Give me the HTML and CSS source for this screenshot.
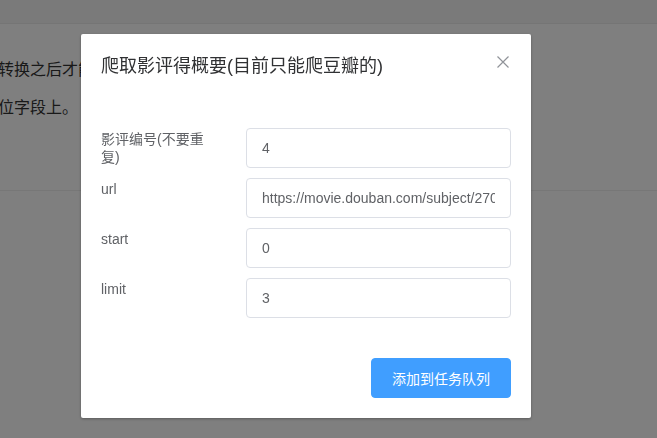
FILE: index.html
```html
<!DOCTYPE html>
<html lang="zh">
<head>
<meta charset="utf-8">
<title>爬取影评</title>
<link rel="stylesheet" href="styles.css">
</head>
<body>
<div class="page">
  <div class="topbar"></div>
  <div class="panel">
    <p class="line">转换之后才能正确保存到对应的数据库中，请注意格式。</p>
    <p class="line">位字段上。</p>
  </div>
</div>
<div class="overlay">
  <div class="dialog">
    <div class="dialog-header">
      <span class="dialog-title">爬取影评得概要(目前只能爬豆瓣的)</span>
      <button class="close" aria-label="关闭">
        <svg width="16" height="16" viewBox="0 0 16 16"><path d="M2.5 2.5 L13.5 13.5 M13.5 2.5 L2.5 13.5" stroke="#909399" stroke-width="1.2" fill="none"/></svg>
      </button>
    </div>
    <div class="dialog-body">
      <form class="form">
        <div class="form-item">
          <label class="form-label">影评编号(不要重复)</label>
          <input class="input" type="text" value="4">
        </div>
        <div class="form-item">
          <label class="form-label">url</label>
          <input class="input" type="text" value="https://movie.douban.com/subject/27010768/">
        </div>
        <div class="form-item">
          <label class="form-label">start</label>
          <input class="input" type="text" value="0">
        </div>
        <div class="form-item">
          <label class="form-label">limit</label>
          <input class="input" type="text" value="3">
        </div>
      </form>
    </div>
    <div class="dialog-footer">
      <button class="btn-primary">添加到任务队列</button>
    </div>
  </div>
</div>
</body>
</html>
```

FILE: styles.css
```css
* { box-sizing: border-box; }
html, body { margin: 0; padding: 0; }
body {
  font-family: "Liberation Sans", "Noto Sans CJK SC", sans-serif;
  background: #ffffff;
  width: 657px;
  height: 438px;
  overflow: hidden;
}
.page { height: 438px; display: flex; flex-direction: column; }
.topbar {
  height: 24px;
  background: #f5f5f5;
  border-bottom: 1px solid #eaeaea;
}
.panel {
  height: 167px;
  background: #ffffff;
  border-bottom: 1px solid #eeeeee;
  padding-top: 27px;
}
.line {
  margin: 0 0 0 -2px;
  font-size: 16px;
  line-height: 38px;
  color: #333333;
  white-space: nowrap;
}
.overlay {
  position: fixed;
  inset: 0;
  background: rgba(0, 0, 0, 0.5);
  padding: 34px 0 0 81px;
}
.dialog {
  width: 450px;
  background: #ffffff;
  border-radius: 2px;
  box-shadow: 0 1px 3px rgba(0, 0, 0, 0.3);
}
.dialog-header {
  padding: 20px 20px 10px;
  display: flex;
  justify-content: space-between;
  align-items: flex-start;
}
.dialog-title {
  font-size: 18px;
  line-height: 24px;
  color: #303133;
}
.close {
  border: 0;
  background: none;
  padding: 0;
  width: 16px;
  height: 16px;
  margin-top: 0;
  display: block;
}
.close svg { display: block; }
.dialog-body { padding: 40px 20px 30px; }
.form { display: flex; flex-direction: column; gap: 10px; }
.form-item { display: flex; align-items: flex-start; }
.form-label {
  width: 145px;
  padding: 2px 35px 0 0;
  font-size: 14px;
  line-height: 18px;
  color: #606266;
}
.input {
  width: 265px;
  height: 40px;
  border: 1px solid #dcdfe6;
  border-radius: 4px;
  padding: 0 15px;
  font-family: inherit;
  font-size: 14px;
  color: #606266;
  outline: none;
}
.dialog-footer {
  padding: 10px 20px 20px;
  display: flex;
  justify-content: flex-end;
}
.btn-primary {
  width: 140px;
  height: 40px;
  border: 1px solid #409eff;
  background: #409eff;
  color: #ffffff;
  border-radius: 4px;
  font-family: inherit;
  font-size: 14px;
  padding: 0;
}
```
